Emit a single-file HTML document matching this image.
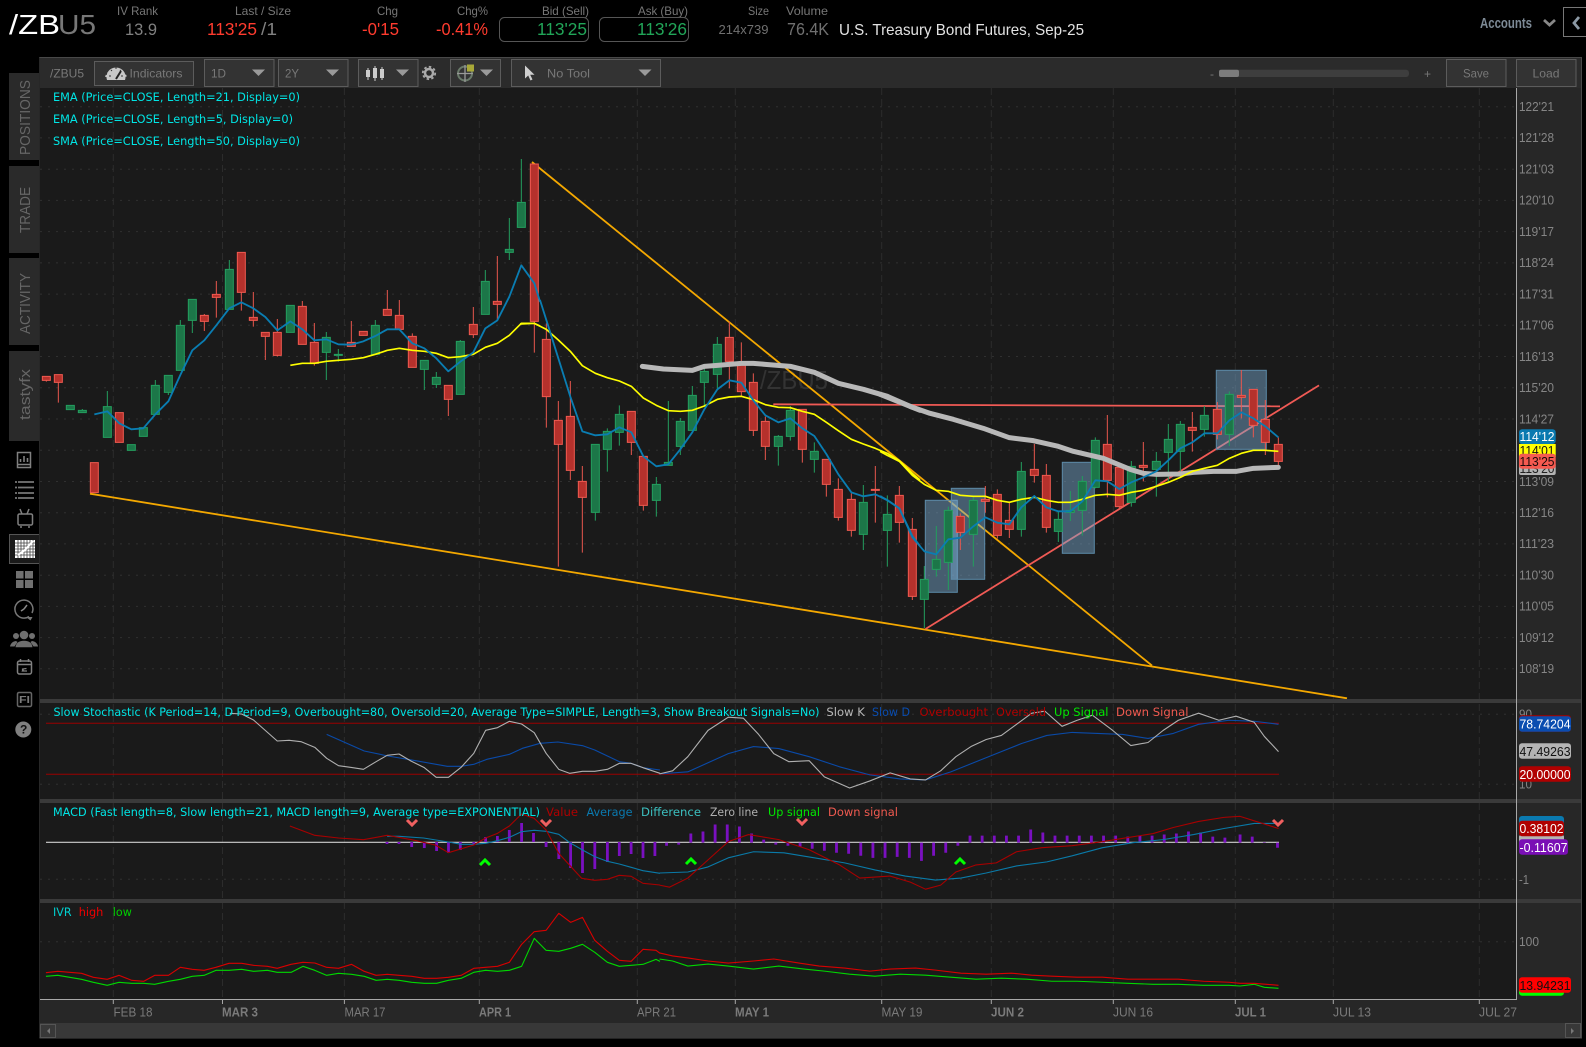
<!DOCTYPE html>
<html><head><meta charset="utf-8"><title>/ZBU5</title>
<style>
html,body{margin:0;padding:0;background:#000;width:1586px;height:1047px;overflow:hidden}
svg{display:block}
text{font-family:"Liberation Sans",sans-serif;white-space:pre}
.lg{font-family:"DejaVu Sans",sans-serif;font-size:11.5px}
.h{font-size:12px;fill:#777}
.ax{font-size:12.5px;fill:#858585}
.dt{font-size:12.5px;fill:#7a7a7a}
.b{font-weight:bold}
.fl{font-size:12.5px}
.tb{font-size:12px;fill:#787878}
.tab{font-size:15px;fill:#666}
.cr{fill:#b5312c;stroke:#f05a50;stroke-width:3}
.cg{fill:#1c7648;stroke:#239e5e;stroke-width:3}
.wr{stroke:#e8574e;stroke-width:3;fill:none}
.wg{stroke:#239e5e;stroke-width:3;fill:none}
.blu{fill:none;stroke:#0a7db2;stroke-width:5.5;stroke-linejoin:round}
.yel{fill:none;stroke:#ffff00;stroke-width:5;stroke-linejoin:round}
.gry{fill:none;stroke:#b8b8b8;stroke-width:15;stroke-linejoin:round;stroke-linecap:round}
.s{fill:none;vector-effect:non-scaling-stroke;stroke-width:1.1;stroke-linejoin:round}
.btn{fill:#333;stroke:#5c5c5c}
.ic{fill:none;stroke:#808080;stroke-width:1.5}
</style></head><body>
<svg width="1586" height="1047" viewBox="0 0 1586 1047" xmlns="http://www.w3.org/2000/svg">
<rect width="1586" height="1047" fill="#000"/>

<!-- header -->
<text x="9" y="34" font-size="28" fill="#fff" textLength="51" lengthAdjust="spacingAndGlyphs">/ZB</text>
<text x="58" y="34" font-size="28" fill="#777" textLength="38" lengthAdjust="spacingAndGlyphs">U5</text>
<text class="h" x="117" y="15" textLength="41" lengthAdjust="spacingAndGlyphs">IV Rank</text>
<text x="125" y="35" font-size="17" fill="#808080" textLength="32" lengthAdjust="spacingAndGlyphs">13.9</text>
<text class="h" x="235" y="15" textLength="56" lengthAdjust="spacingAndGlyphs">Last / Size</text>
<text x="207" y="35" font-size="17.5" fill="#ff3b2e" textLength="50" lengthAdjust="spacingAndGlyphs">113'25</text>
<text x="261" y="35" font-size="17.5" fill="#808080" textLength="16" lengthAdjust="spacingAndGlyphs">/1</text>
<text class="h" x="377" y="15" textLength="21" lengthAdjust="spacingAndGlyphs">Chg</text>
<text x="362" y="35" font-size="17.5" fill="#ff3b2e" textLength="37" lengthAdjust="spacingAndGlyphs">-0'15</text>
<text class="h" x="457" y="15" textLength="31" lengthAdjust="spacingAndGlyphs">Chg%</text>
<text x="436" y="35" font-size="17.5" fill="#ff3b2e" textLength="52" lengthAdjust="spacingAndGlyphs">-0.41%</text>
<text class="h" x="542" y="15" textLength="47" lengthAdjust="spacingAndGlyphs">Bid (Sell)</text>
<rect x="499.5" y="17.5" width="89" height="24" rx="5" fill="#000" stroke="#555"/>
<text x="537" y="35" font-size="17.5" fill="#21a558" textLength="50" lengthAdjust="spacingAndGlyphs">113'25</text>
<text class="h" x="638" y="15" textLength="50" lengthAdjust="spacingAndGlyphs">Ask (Buy)</text>
<rect x="599.5" y="17.5" width="89" height="24" rx="5" fill="#000" stroke="#555"/>
<text x="637" y="35" font-size="17.5" fill="#21a558" textLength="50" lengthAdjust="spacingAndGlyphs">113'26</text>
<text class="h" x="748" y="15" textLength="21" lengthAdjust="spacingAndGlyphs">Size</text>
<text x="718.5" y="34" font-size="13" fill="#707070" textLength="50" lengthAdjust="spacingAndGlyphs">214x739</text>
<text class="h" x="786" y="15" textLength="42" lengthAdjust="spacingAndGlyphs">Volume</text>
<text x="787" y="35" font-size="17.5" fill="#707070" textLength="42" lengthAdjust="spacingAndGlyphs">76.4K</text>
<text x="839" y="35" font-size="16" fill="#e2e2e2" textLength="245" lengthAdjust="spacingAndGlyphs">U.S. Treasury Bond Futures, Sep-25</text>
<text x="1480" y="28" font-size="15" font-weight="bold" fill="#7d8a96" textLength="52" lengthAdjust="spacingAndGlyphs">Accounts</text>
<path d="M1544 20l5.5 5 5.5-5" fill="none" stroke="#888" stroke-width="2.8"/>
<rect x="1563.5" y="7.5" width="30" height="29" fill="none" stroke="#777"/>
<path d="M1579 17l-5 6 5 6" fill="none" stroke="#8d9aa6" stroke-width="2.8"/>

<!-- left tabs -->
<rect x="9" y="73" width="30" height="87" fill="#2a2a2a"/>
<rect x="9" y="166" width="30" height="87" fill="#2a2a2a"/>
<rect x="9" y="258" width="30" height="87" fill="#2a2a2a"/>
<rect x="9" y="351" width="30" height="90" fill="#2a2a2a"/>
<text class="tab" transform="translate(30,155) rotate(-90)" textLength="75" lengthAdjust="spacingAndGlyphs">POSITIONS</text>
<text class="tab" transform="translate(30,233) rotate(-90)" textLength="46" lengthAdjust="spacingAndGlyphs">TRADE</text>
<text class="tab" transform="translate(30,334) rotate(-90)" textLength="61" lengthAdjust="spacingAndGlyphs">ACTIVITY</text>
<text class="tab" transform="translate(30,420) rotate(-90)" textLength="51" lengthAdjust="spacingAndGlyphs">tastyfx</text>

<!-- sidebar icons -->
<g class="ic">
<path d="M17.5 452.5h13v12h-13zM17.5 464.5v3h13v-3"/>
<path d="M20.5 462v-3M24 462v-6M27.5 462v-4" stroke-width="1.6"/>
</g>
<path d="M15 482h19M15 487.500h19M15 493h19M15 498h19" stroke="#777" stroke-width="1.8" stroke-dasharray="2 1 16 1"/>
<g class="ic"><rect x="18" y="514" width="14.500" height="11" rx="1.500"/><path d="M22 514l-2-5M27 514l2-5M20 527h2M28 527h2"/></g>
<rect x="9.500" y="534.500" width="31" height="29" fill="#1a1a1a" stroke="#555"/>
<path d="M15 540h20v18h-20z" fill="#fff"/>
<path d="M15 543h20M15 546h20M15 549h20M15 552h20M15 555h20M18 540v18M21 540v18M24 540v18M27 540v18M30 540v18M33 540v18" stroke="#444" stroke-width=".8"/>
<path d="M18 555l7-5 8-9" stroke="#fff" stroke-width="2" fill="none"/>
<path d="M16 571h7.500v7.500h-7.500zM25 571h8v7.500h-8zM16 580h7.500v8h-7.500zM25 580h8v8h-8z" fill="#707070"/>
<g class="ic" stroke-width="1.600"><path d="M32 613a9 9 0 1 0-3 3.500" stroke="#777"/><path d="M24 609l3-4M24 609l-3 2" stroke="#888"/><path d="M26 617h6.500l-2 3.500z" fill="#777" stroke="none"/></g>
<g fill="#6f6f6f">
<circle cx="16" cy="636" r="3"/><circle cx="32" cy="636" r="3"/>
<path d="M10 646.500c.5-3 2.500-5 6-5.500l1.500 1-3 4.500zM38 646.500c-.5-3-2.500-5-6-5.500l-1.500 1 3 4.500z"/>
<circle cx="24" cy="635" r="4.300"/>
<path d="M15.500 647.300c.5-4 3-6.500 8.500-6.500s8 2.500 8.500 6.500z"/>
</g>
<g class="ic"><rect x="17.500" y="661" width="14" height="13" rx="2"/><path d="M17.500 664.500h14M20.500 659v3M28.500 659v3"/><path d="M27 671h-4.500l1-1.500M22.500 671l0-2 4-.5" stroke-width="1.200"/></g>
<rect x="17.500" y="692.500" width="14" height="14" rx="1.500" fill="none" stroke="#666" stroke-width="1.500"/>
<text x="19" y="703" font-size="10" font-weight="bold" fill="#7a7a7a" textLength="11" lengthAdjust="spacingAndGlyphs">FI</text>
<circle cx="23.300" cy="729.500" r="8" fill="#808080"/>
<text x="20" y="733.500" font-size="12" font-weight="bold" fill="#111">?</text>

<!-- chart frame -->
<rect x="39" y="57" width="1543" height="981" fill="#272727"/>
<path d="M39.500 57.500H1581.500V1038H39.500" fill="none" stroke="#484848"/>
<rect x="40" y="58" width="1541" height="30" fill="#2b2b2b"/>
<rect x="40" y="88" width="1476.500" height="911" fill="#1a1a1a"/>

<!-- grid -->
<path d="M40 106.700H1516M40 137.900H1516M40 169.200H1516M40 200.400H1516M40 231.600H1516M40 262.900H1516M40 294.100H1516M40 325.300H1516M40 356.500H1516M40 387.800H1516M40 419H1516M40 450.200H1516M40 481.500H1516M40 512.700H1516M40 543.900H1516M40 575.200H1516M40 606.400H1516M40 637.600H1516M40 668.800H1516M40 714.300H1516M40 784.300H1516M40 879.300H1516M40 941.700H1516" stroke="#303030" stroke-dasharray="2 6" fill="none"/>
<path d="M113.300 88V999M222.500 88V999M344.400 88V999M479.300 88V999M637.300 88V999M735.300 88V999M881.700 88V999M991.300 88V999M1113.300 88V999M1235.300 88V999M1333.300 88V999M1479.300 88V999" stroke="#2c2c2c" stroke-dasharray="7 4" fill="none"/>

<!-- watermark -->
<text x="760" y="389" font-size="26" fill="#333" textLength="68" lengthAdjust="spacingAndGlyphs">/ZBU5</text>

<!-- trend lines -->
<path d="M90 493.700L1347 698.300" stroke="#f4a800" stroke-width="1.800" fill="none"/>
<path d="M532 162L1152 665.600" stroke="#f4a800" stroke-width="1.800" fill="none"/>
<path d="M925.500 629L1319 385.400" stroke="#f05a55" stroke-width="1.800" fill="none"/>
<path d="M773.300 404.300L1280 406.300" stroke="#f05a55" stroke-width="1.800" fill="none"/>

<!-- blue rects -->
<g fill="#7cb0d8" fill-opacity=".45" stroke="#5c8aa8">
<rect x="925.300" y="500.300" width="32" height="92"/>
<rect x="951.300" y="488.300" width="33.400" height="91"/>
<rect x="1062.300" y="462.300" width="32" height="91"/>
<rect x="1216.300" y="370.300" width="50" height="79"/>
</g>

<!-- candles A -->
<g transform="translate(40,180) scale(.33333)">
<path class="wr" d="M19 589V605M55 584V668M493 402V453M529 303V413M604 217V392M640 336V440M676 457V540M712 417V530M787 363V493M823 429V557M934 423V499M1042 330V406M1078 360V448M1117 460V562M1225 616V708M1300 381V474M1372 228V420M1483 -48V518"/>
<path class="wg" d="M127 687V698M202 633V772M346 600V703M385 586V645M421 420V571M457 358V459M568 240V388M859 456V600M895 507V545M1006 420V523M1153 541V630M1189 576V624M1261 480V643M1336 270V403M1408 114V240M1444 -63V142"/>
<path class="cr" d="M7 589h24V601h-24zM43 584h24V607h-24zM151 848h24V938h-24zM226 698h24V787h-24zM481 406h24V424h-24zM517 343h24V352h-24zM592 217h24V337h-24zM628 412h24V421h-24zM664 457h24V469h-24zM700 457h24V526h-24zM775 379h24V493h-24zM811 487h24V550h-24zM922 487h24V499h-24zM958 454h24V466h-24zM1030 388h24V406h-24zM1066 406h24V448h-24zM1105 469h24V562h-24zM1213 616h24V658h-24zM1288 433h24V464h-24zM1360 364h24V373h-24zM1471 -48h24V424h-24z"/>
<path class="cg" d="M79 676h24V689h-24zM115 691h24V698h-24zM190 680h24V772h-24zM262 794h24V811h-24zM298 743h24V769h-24zM334 616h24V703h-24zM373 586h24V637h-24zM409 436h24V571h-24zM445 358h24V421h-24zM556 268h24V388h-24zM739 376h24V457h-24zM847 472h24V517h-24zM883 523h24V526h-24zM994 436h24V523h-24zM1141 541h24V568h-24zM1177 592h24V613h-24zM1249 484h24V643h-24zM1324 304h24V403h-24zM1396 208h24V217h-24zM1432 67h24V142h-24z"/>
</g>
<!-- candles B -->
<g transform="translate(520,300) scale(.33333)">
<path class="wr" d="M79 70V383M115 303V800M151 243V540M187 498V758M334 334V465M370 469V632M628 65V265M664 127V290M700 220V408M736 350V480M847 328V488M919 478V590M955 535V662M994 580V710M1066 498V668M1138 558V728"/>
<path class="wg" d="M226 433V662M262 385V515M298 316V437M409 531V650M445 303V496M481 354V465M517 258V391M553 205V318M592 111V265M775 405V497M811 318V422M883 427V518M1030 555V750M1102 586V800"/>
<path class="cr" d="M67 118h24V290h-24zM103 361h24V433h-24zM139 349h24V511h-24zM175 544h24V592h-24zM322 334h24V427h-24zM358 469h24V616h-24zM616 112h24V184h-24zM652 190h24V275h-24zM688 247h24V391h-24zM724 364h24V439h-24zM835 328h24V448h-24zM907 478h24V553h-24zM943 568h24V652h-24zM982 598h24V691h-24zM1054 568h24V571h-24zM1126 586h24V667h-24z"/>
<path class="cg" d="M214 433h24V637h-24zM250 394h24V448h-24zM286 343h24V397h-24zM397 553h24V601h-24zM433 487h24V496h-24zM469 364h24V439h-24zM505 286h24V391h-24zM541 214h24V247h-24zM580 133h24V223h-24zM763 409h24V439h-24zM799 331h24V409h-24zM871 454h24V478h-24zM1018 607h24V703h-24zM1090 643h24V691h-24z"/>
</g>
<!-- candles C -->
<g transform="translate(880,350) scale(.33333)">
<path class="wr" d="M97 504V750M241 490V600M316 408V488M352 418V566M388 457V564M463 282V398M499 342V548M682 195V442M718 340V475M790 276V394M937 186V305M1012 156V268M1084 60V205M1120 118V262M1156 150V315M1195 262V348"/>
<path class="wg" d="M133 648V834M169 528V680M205 470V720M280 436V650M424 336V560M535 486V576M571 423V513M607 378V557M646 262V415M754 333V470M829 306V440M865 222V395M901 213V364M973 168V260M1048 124V288"/>
<path class="cr" d="M85 538h24V739h-24zM229 499h24V547h-24zM304 448h24V454h-24zM340 433h24V556h-24zM376 511h24V538h-24zM451 358h24V376h-24zM487 376h24V532h-24zM670 283h24V391h-24zM706 352h24V470h-24zM778 346h24V352h-24zM925 232h24V241h-24zM1000 178h24V253h-24zM1072 136h24V142h-24zM1108 118h24V226h-24zM1144 208h24V277h-24zM1183 283h24V334h-24z"/>
<path class="cg" d="M121 688h24V748h-24zM157 628h24V658h-24zM193 481h24V637h-24zM268 451h24V553h-24zM412 364h24V538h-24zM523 508h24V544h-24zM559 481h24V487h-24zM595 394h24V481h-24zM634 271h24V412h-24zM742 349h24V457h-24zM817 334h24V358h-24zM853 268h24V307h-24zM889 223h24V304h-24zM961 196h24V238h-24zM1036 133h24V253h-24z"/>
</g>

<!-- moving averages -->
<g transform="translate(40,180) scale(.33333)">
<path class="yel" d="M751 556L787 550 823 550 859 544 895 541 934 538 970 533 1006 523 1042 511 1078 505 1117 511 1153 514 1189 520 1225 533 1261 530 1300 523 1336 502 1372 490 1408 466 1444 430 1483 430 1500 438"/>
<path class="blu" d="M163 703L202 694 238 730 274 748 310 745 346 703 385 664 421 585 457 511 493 481 529 436 568 385 604 367 640 385 676 411 712 451 751 424 787 448 823 481 859 478 895 493 934 494 970 484 1006 468 1042 448 1078 448 1117 490 1153 505 1189 535 1225 574 1261 545 1300 517 1336 445 1372 421 1408 350 1444 256 1483 310 1500 365"/>
</g>
<g transform="translate(520,300) scale(.33333)">
<path class="gry" d="M367 199L430 207 517 211 553 199 592 196 664 190 700 190 736 193 811 199 883 217 955 250 1030 268 1102 289 1177 322 1200 331"/>
<path class="yel" d="M0 72L43 70 79 88 115 120 151 154 187 197 226 220 262 233 298 243 334 259 370 294 409 316 445 332 481 334 517 331 553 318 592 298 628 291 664 289 700 299 736 314 775 322 811 323 847 334 883 343 919 367 955 392 994 418 1030 432 1066 445 1102 460 1138 482 1177 520 1200 540"/>
<path class="blu" d="M60 0L79 60 115 175 151 290 187 394 226 406 262 403 298 382 334 397 370 469 409 499 445 493 481 448 517 397 553 328 592 268 628 241 664 248 700 301 736 346 775 367 811 355 847 385 883 408 919 462 955 523 994 577 1030 589 1066 583 1102 601 1138 625 1177 708 1200 738"/>
</g>
<g transform="translate(880,350) scale(.33333)">
<path class="gry" d="M0 133L30 145 90 169 150 190 220 208 310 235 388 263 460 272 535 289 580 304 670 325 750 358 790 370 830 373 900 372 940 367 1000 364 1070 364 1120 355 1195 352"/>
<path class="yel" d="M0 304L22 316 58 334 97 376 133 403 169 421 205 424 241 436 280 439 316 439 352 451 388 457 424 448 463 442 499 451 535 457 571 457 607 448 646 436 682 433 718 436 754 427 790 421 829 409 865 397 901 382 937 364 973 355 1012 346 1048 325 1084 310 1120 301 1156 301 1195 304"/>
<path class="blu" d="M0 438L22 450 58 475 97 562 133 604 169 613 205 568 241 563 280 529 316 502 352 518 388 523 424 472 463 438 499 472 535 484 571 484 607 454 646 391 682 394 718 417 754 397 790 382 829 364 865 331 901 295 937 277 973 250 1012 250 1048 211 1084 187 1120 205 1156 229 1195 262"/>
</g>

<!-- legends main -->
<text class="lg" x="53" y="101" fill="#00e5e5" textLength="247" lengthAdjust="spacingAndGlyphs">EMA (Price=CLOSE, Length=21, Display=0)</text>
<text class="lg" x="53" y="123" fill="#00e5e5" textLength="240" lengthAdjust="spacingAndGlyphs">EMA (Price=CLOSE, Length=5, Display=0)</text>
<text class="lg" x="53" y="145" fill="#00e5e5" textLength="247" lengthAdjust="spacingAndGlyphs">SMA (Price=CLOSE, Length=50, Display=0)</text>

<!-- stochastic -->
<path d="M46 723.300H1279M46 774.300H1279" stroke="#9a0000" stroke-width="1" fill="none"/>
<g transform="translate(40,690) scale(.3954,.33333)">
<path class="s" stroke="#0a4aa8" d="M725 133L820 183 880 198 950 212 1030 229 1065 229 1097 223 1130 208 1187 193 1220 175 1265 160 1310 156 1372 167 1403 180 1465 215 1495 220 1525 233 1568 240"/>
<path class="s" stroke="#b0b0b0" d="M480 70L510 72 540 90 600 153 630 151 660 155 695 172 725 205 755 227 785 232 818 238 850 215 878 196 908 192 938 213 972 233 1002 262 1033 262 1065 232 1097 190 1127 121 1157 113 1187 94 1218 102 1250 128 1280 190 1312 238 1340 250 1372 244 1403 244 1435 238 1465 220 1495 220 1525 233 1568 250"/>
</g>
<g transform="scale(1.01148,1.01159)">
<path class="s" stroke="#0a4aa8" d="M652 765L680 763 700 754 720 745 745 738 770 740 800 748 830 758 860 766 890 770 915 771 940 763 960 755 985 745 1010 735 1035 727 1060 724 1085 725 1110 726 1135 730 1160 725 1185 716 1215 712 1240 713 1264 716"/>
<path class="s" stroke="#b0b0b0" d="M652 765L665 762 680 748 700 722 720 709 735 710 750 726 765 745 780 753 800 752 815 768 840 779 860 772 880 764 900 770 915 771 930 762 945 748 960 738 975 731 990 727 1005 716 1020 705 1033 703 1050 718 1065 712 1080 707 1100 722 1118 737 1135 734 1150 722 1165 712 1185 705 1205 712 1222 708 1240 714 1250 728 1264 743"/>
</g>
<text class="lg" x="53.500" y="716" fill="#00e5e5" textLength="766" lengthAdjust="spacingAndGlyphs">Slow Stochastic (K Period=14, D Period=9, Overbought=80, Oversold=20, Average Type=SIMPLE, Length=3, Show Breakout Signals=No)</text>
<text class="lg" x="826.400" y="716" fill="#b8b8b8" textLength="38.500" lengthAdjust="spacingAndGlyphs">Slow K</text>
<text class="lg" x="872" y="716" fill="#0a4db0" textLength="38" lengthAdjust="spacingAndGlyphs">Slow D</text>
<text class="lg" x="919.500" y="716" fill="#b00000" textLength="68.500" lengthAdjust="spacingAndGlyphs">Overbought</text>
<text class="lg" x="996" y="716" fill="#b00000" textLength="50" lengthAdjust="spacingAndGlyphs">Oversold</text>
<text class="lg" x="1054" y="716" fill="#00e800" textLength="54.500" lengthAdjust="spacingAndGlyphs">Up Signal</text>
<text class="lg" x="1116" y="716" fill="#f05a50" textLength="72.500" lengthAdjust="spacingAndGlyphs">Down Signal</text>

<!-- MACD -->
<path d="M46 842.300H1279" stroke="#cfcfcf" stroke-width="1.200" fill="none"/>
<g stroke="#7a10c0" stroke-width="2.800" fill="none">
<g transform="translate(40,0)">
<path d="M347 842V844M359 842V844M371.700 842V847M384.300 842V848M396.600 842V851M408.500 842V853M420.300 842V850M433.800 842V844M445.600 837V842M457.400 836V842M469.300 830V842M481.600 823V842M493.500 833V842M506.100 842V847M518.800 842V859M530.600 842V868M542.500 842V873M554.800 842V869M567.400 842V862M579.300 842V856M591.100 842V854M603 842V858M614.900 842V856"/>
</g>
<g transform="scale(1.01148,1.01159)">
<path d="M659 833V836M671 833V835M683 833V824M695 833V822M707 833V815M719 833V815M731 833V817M743 833V824M755 833V830M767 833V835M779 833V836M791 833V837M803 833V839M815 833V841M827 833V843M839 833V844M851 833V846M863 833V848M875 833V848M887 833V847M899 833V848M911 833V851M923 833V846M935 833V843M947 833V836M959 833V826M971 833V826M983 833V826M995 833V826M1007 833V826M1019 833V820M1031 833V823M1043 833V826M1055 833V826M1067 833V826M1079 833V826M1091 833V826M1103 833V826M1115 833V827M1127 833V826M1139 833V826M1151 833V825M1163 833V824M1175 833V822M1187 833V823M1199 833V827M1211 833V828M1226 833V825M1238 833V827M1250 833V832.500M1263 833V838"/>
</g>
</g>
<g transform="translate(40,690) scale(.3954,.33333)">
<path class="s" stroke="#0a7aa8" d="M878 439L908 439 970 444 1033 456 1065 463 1097 463 1127 460 1157 452 1187 442 1218 425 1250 421 1280 424 1312 433 1340 458 1372 480 1403 500 1435 514 1465 522 1495 532 1525 542 1568 550"/>
<path class="s" stroke="#a80000" d="M632 408L695 436 755 444 818 449 878 436 940 449 1000 465 1033 488 1097 465 1127 444 1157 430 1187 408 1218 372 1250 385 1280 420 1312 490 1370 565 1403 571 1435 568 1465 556 1495 559 1525 580 1568 585"/>
</g>
<g transform="scale(1.01148,1.01159)">
<path class="s" stroke="#0a7aa8" d="M652 863L680 862 700 857 720 848 745 842 775 843 805 848 835 853 865 860 895 866 925 870 950 868 975 863 1005 856 1035 852 1060 846 1090 838 1120 833 1150 830 1180 825 1210 819 1240 814 1264 814"/>
<path class="s" stroke="#a80000" d="M652 875L662 877 680 868 700 850 720 832 740 825 770 830 800 840 830 855 850 868 880 866 900 872 915 879 930 875 945 862 965 855 985 853 1005 842 1030 838 1060 836 1090 832 1115 828 1140 824 1160 818 1185 812 1210 808 1226 807 1264 819"/>
</g>
<g fill="none" stroke="#f06060" stroke-width="3">
<path d="M407 820l5 5 5-5M541 820l5 5 5-5M797 819l5 5 5-5M1273 820l5 5 5-5"/>
</g>
<g fill="none" stroke="#00ff00" stroke-width="3">
<path d="M480 865l5-5 5 5M686 864l5-5 5 5M955 864l5-5 5 5"/>
</g>
<text class="lg" x="53" y="816" fill="#00e5e5" textLength="487" lengthAdjust="spacingAndGlyphs">MACD (Fast length=8, Slow length=21, MACD length=9, Average type=EXPONENTIAL)</text>
<text class="lg" x="546" y="816" fill="#b00000" textLength="32" lengthAdjust="spacingAndGlyphs">Value</text>
<text class="lg" x="586.500" y="816" fill="#0a7ab0" textLength="46" lengthAdjust="spacingAndGlyphs">Average</text>
<text class="lg" x="641" y="816" fill="#3cc0c0" textLength="60" lengthAdjust="spacingAndGlyphs">Difference</text>
<text class="lg" x="710" y="816" fill="#b0b0b0" textLength="48" lengthAdjust="spacingAndGlyphs">Zero line</text>
<text class="lg" x="768" y="816" fill="#00e800" textLength="52" lengthAdjust="spacingAndGlyphs">Up signal</text>
<text class="lg" x="828" y="816" fill="#f05a50" textLength="70" lengthAdjust="spacingAndGlyphs">Down signal</text>

<!-- IVR -->
<g transform="translate(40,890) scale(.3954,.33333)">
<path class="s" stroke="#00d800" d="M15 259L45 256 105 268 135 277 170 286 200 277 232 280 262 280 290 283 325 274 355 268 385 259 415 256 445 241 478 241 510 238 540 244 575 241 600 247 635 247 665 229 695 241 725 256 755 250 788 253 820 259 850 271 878 268 908 271 940 277 972 280 1003 280 1033 271 1065 265 1097 247 1127 241 1157 244 1187 241 1218 229 1250 145 1280 181 1312 184 1342 175 1372 163 1403 187 1435 217 1465 229 1495 226 1525 223 1558 208 1568 214"/>
<path class="s" stroke="#d80000" d="M15 248L45 244 105 250 135 262 170 268 200 256 232 271 262 274 290 256 325 256 355 232 385 238 415 241 445 232 478 220 510 220 540 226 575 229 600 235 635 223 665 217 695 219 725 232 755 235 788 223 820 244 850 256 878 253 908 256 940 259 972 265 1003 265 1033 262 1065 256 1097 235 1127 232 1157 229 1187 217 1218 163 1250 125 1280 121 1312 70 1342 97 1372 82 1403 151 1435 184 1465 211 1495 214 1525 178 1558 181 1568 190"/>
</g>
<g transform="scale(1.01148,1.01159)">
<path class="s" stroke="#00d800" d="M652 948L665 950 680 955 700 953 720 955 745 958 770 955 795 958 815 960 840 963 865 965 890 963 915 964 940 966 965 968 990 967 1015 968 1040 970 1065 970 1090 971 1115 972 1140 973 1165 973 1190 974 1215 974 1226 974.700 1240 973 1250 976 1264 977"/>
<path class="s" stroke="#d80000" d="M652 942L665 945 680 947 700 950 720 952 745 950 765 948 790 952 810 955 835 957 860 960 880 958 905 957 925 959 950 962 975 963 1000 962 1020 964 1040 965 1065 966 1090 966 1115 968 1140 968 1165 968 1190 970 1215 971 1226 972 1240 972 1264 974"/>
</g>
<text class="lg" x="53" y="916" fill="#00d0d0" textLength="18.600" lengthAdjust="spacingAndGlyphs">IVR</text>
<text class="lg" x="78.700" y="916" fill="#ee0000" textLength="24.600" lengthAdjust="spacingAndGlyphs">high</text>
<text class="lg" x="112.800" y="916" fill="#00d000" textLength="19" lengthAdjust="spacingAndGlyphs">low</text>

<!-- right panel + separators -->
<rect x="1517" y="88" width="64" height="911" fill="#272727"/>
<path d="M40 701H1581M40 801H1581M40 901H1581" stroke="#3a3a3a" stroke-width="4" fill="none"/>
<path d="M1516.500 88V999.500H40" stroke="#a8a8a8" fill="none"/>
<path d="M113.300 1000v4M222.500 1000v4M344.400 1000v4M479.300 1000v4M637.300 1000v4M735.300 1000v4M881.700 1000v4M991.300 1000v4M1113.300 1000v4M1235.300 1000v4M1333.300 1000v4M1479.300 1000v4" stroke="#a8a8a8" fill="none"/>

<!-- price axis -->
<g>
<text class="ax" x="1519" y="111" textLength="35" lengthAdjust="spacingAndGlyphs">122'21</text>
<text class="ax" x="1519" y="142" textLength="35" lengthAdjust="spacingAndGlyphs">121'28</text>
<text class="ax" x="1519" y="173.500" textLength="35" lengthAdjust="spacingAndGlyphs">121'03</text>
<text class="ax" x="1519" y="204.700" textLength="35" lengthAdjust="spacingAndGlyphs">120'10</text>
<text class="ax" x="1519" y="236" textLength="35" lengthAdjust="spacingAndGlyphs">119'17</text>
<text class="ax" x="1519" y="267" textLength="35" lengthAdjust="spacingAndGlyphs">118'24</text>
<text class="ax" x="1519" y="298.500" textLength="35" lengthAdjust="spacingAndGlyphs">117'31</text>
<text class="ax" x="1519" y="329.600" textLength="35" lengthAdjust="spacingAndGlyphs">117'06</text>
<text class="ax" x="1519" y="361" textLength="35" lengthAdjust="spacingAndGlyphs">116'13</text>
<text class="ax" x="1519" y="392" textLength="35" lengthAdjust="spacingAndGlyphs">115'20</text>
<text class="ax" x="1519" y="423.400" textLength="35" lengthAdjust="spacingAndGlyphs">114'27</text>
<text class="ax" x="1519" y="486" textLength="35" lengthAdjust="spacingAndGlyphs">113'09</text>
<text class="ax" x="1519" y="517" textLength="35" lengthAdjust="spacingAndGlyphs">112'16</text>
<text class="ax" x="1519" y="548.200" textLength="35" lengthAdjust="spacingAndGlyphs">111'23</text>
<text class="ax" x="1519" y="579.500" textLength="35" lengthAdjust="spacingAndGlyphs">110'30</text>
<text class="ax" x="1519" y="610.700" textLength="35" lengthAdjust="spacingAndGlyphs">110'05</text>
<text class="ax" x="1519" y="642" textLength="35" lengthAdjust="spacingAndGlyphs">109'12</text>
<text class="ax" x="1519" y="673" textLength="35" lengthAdjust="spacingAndGlyphs">108'19</text>
<text class="ax" x="1519" y="718.500" textLength="13" lengthAdjust="spacingAndGlyphs">90</text>
<text class="ax" x="1519" y="788.500" textLength="13" lengthAdjust="spacingAndGlyphs">10</text>
<text class="ax" x="1519" y="884" textLength="10" lengthAdjust="spacingAndGlyphs">-1</text>
<text class="ax" x="1519" y="946" textLength="20" lengthAdjust="spacingAndGlyphs">100</text>
</g>

<!-- flags main -->
<rect x="1519" y="463" width="36.700" height="12" rx="2" fill="#b4b4b4"/>
<text class="fl" x="1519.500" y="473" fill="#222" textLength="35" lengthAdjust="spacingAndGlyphs">113'20</text>
<rect x="1519" y="444" width="36.700" height="13" fill="#ffff00"/>
<text class="fl" x="1519.500" y="455" fill="#111" textLength="35" lengthAdjust="spacingAndGlyphs">114'01</text>
<rect x="1519" y="429.300" width="36.700" height="14.700" rx="3" fill="#0a7ab0"/>
<text class="fl" x="1519.500" y="441" fill="#fff" textLength="35" lengthAdjust="spacingAndGlyphs">114'12</text>
<rect x="1519" y="453.700" width="36.700" height="15" rx="3" fill="#f55a50"/>
<text class="fl" x="1519.500" y="466" fill="#1a0a0a" textLength="35" lengthAdjust="spacingAndGlyphs">113'25</text>

<!-- flags stoch -->
<rect x="1519" y="715.300" width="52" height="16.400" rx="3" fill="#a80000"/>
<rect x="1519" y="716.200" width="52" height="15.500" rx="3" fill="#0a4db0"/>
<text class="fl" x="1519.500" y="728.500" fill="#fff" textLength="51" lengthAdjust="spacingAndGlyphs">78.74204</text>
<rect x="1519" y="743.300" width="52" height="15.500" rx="3" fill="#b4b4b4"/>
<text class="fl" x="1519.500" y="756" fill="#111" textLength="51" lengthAdjust="spacingAndGlyphs">47.49263</text>
<rect x="1519" y="766.300" width="52" height="15.500" rx="3" fill="#b00000"/>
<text class="fl" x="1519.500" y="779" fill="#fff" textLength="51" lengthAdjust="spacingAndGlyphs">20.00000</text>

<!-- flags macd -->
<rect x="1519" y="816" width="45" height="12" rx="3" fill="#0a7ab0"/>
<rect x="1519" y="835" width="45" height="8" rx="2" fill="#b4b4b4"/>
<rect x="1519" y="820.700" width="45" height="15.600" rx="3" fill="#b00000"/>
<text class="fl" x="1519.500" y="833" fill="#fff" textLength="44" lengthAdjust="spacingAndGlyphs">0.38102</text>
<rect x="1519" y="839.300" width="49" height="15.400" rx="3" fill="#7a0fb5"/>
<text class="fl" x="1519.500" y="852" fill="#fff" textLength="48" lengthAdjust="spacingAndGlyphs">-0.11607</text>

<!-- flags ivr -->
<rect x="1519" y="982" width="45" height="13.700" rx="3" fill="#00ff00"/>
<rect x="1519" y="977.300" width="52" height="15.400" rx="3" fill="#ff0000"/>
<text class="fl" x="1519.500" y="990" fill="#111" textLength="51" lengthAdjust="spacingAndGlyphs">13.94231</text>

<!-- date axis -->
<text class="dt" x="113.500" y="1016.500" textLength="39" lengthAdjust="spacingAndGlyphs">FEB 18</text>
<text class="dt b" x="222" y="1016.500" textLength="36" lengthAdjust="spacingAndGlyphs">MAR 3</text>
<text class="dt" x="344.500" y="1016.500" textLength="41" lengthAdjust="spacingAndGlyphs">MAR 17</text>
<text class="dt b" x="479" y="1016.500" textLength="32" lengthAdjust="spacingAndGlyphs">APR 1</text>
<text class="dt" x="637" y="1016.500" textLength="39" lengthAdjust="spacingAndGlyphs">APR 21</text>
<text class="dt b" x="735" y="1016.500" textLength="34" lengthAdjust="spacingAndGlyphs">MAY 1</text>
<text class="dt" x="881.500" y="1016.500" textLength="41" lengthAdjust="spacingAndGlyphs">MAY 19</text>
<text class="dt b" x="991" y="1016.500" textLength="33" lengthAdjust="spacingAndGlyphs">JUN 2</text>
<text class="dt" x="1113" y="1016.500" textLength="40" lengthAdjust="spacingAndGlyphs">JUN 16</text>
<text class="dt b" x="1235" y="1016.500" textLength="31" lengthAdjust="spacingAndGlyphs">JUL 1</text>
<text class="dt" x="1333" y="1016.500" textLength="38" lengthAdjust="spacingAndGlyphs">JUL 13</text>
<text class="dt" x="1479" y="1016.500" textLength="38" lengthAdjust="spacingAndGlyphs">JUL 27</text>

<!-- scroll bar -->
<rect x="40" y="1023" width="1541" height="15" fill="#383838"/>
<rect x="40.500" y="1024.500" width="15" height="13" fill="none" stroke="#555"/>
<path d="M50 1028v6l-3-3z" fill="#777"/>
<rect x="1565.500" y="1023.500" width="15" height="14" fill="none" stroke="#555"/>
<path d="M1571 1028v6l3-3z" fill="#777"/>

<!-- toolbar -->
<text class="tb" x="50" y="77.500" textLength="34" lengthAdjust="spacingAndGlyphs">/ZBU5</text>
<rect class="btn" x="94.500" y="61.500" width="99" height="24"/>
<path d="M107 80a9.500 9.500 0 1 1 18 0z" fill="#c8c8c8"/>
<path d="M106 77a10.500 10.500 0 0 1 20 0" fill="none" stroke="#c8c8c8" stroke-width="2" stroke-dasharray="2 2"/>
<path d="M116 79l5-8" stroke="#222" stroke-width="2"/>
<path d="M109 76h2M111 70l1 1M116 67v2M121 70l-1 1M123 76h-2" stroke="#333" stroke-width="1"/>
<text class="tb" x="129.500" y="77.500" textLength="53" lengthAdjust="spacingAndGlyphs">Indicators</text>
<rect class="btn" x="204.500" y="59.500" width="69.500" height="27"/>
<text class="tb" x="211" y="77.500" textLength="15" lengthAdjust="spacingAndGlyphs">1D</text>
<path d="M252 69.500h13l-6.500 6.500z" fill="#9a9a9a"/>
<rect class="btn" x="278.500" y="59.500" width="69.500" height="27"/>
<text class="tb" x="285" y="77.500" textLength="14" lengthAdjust="spacingAndGlyphs">2Y</text>
<path d="M326 69.500h13l-6.500 6.500z" fill="#9a9a9a"/>
<rect class="btn" x="358.500" y="59.500" width="59.500" height="27"/>
<path d="M368 68v12M375 66v15M382 67v13" stroke="#ccc" fill="none"/>
<path d="M366 70h4v7h-4zM373 68h4v10h-4zM380 69h4v9h-4z" fill="#ccc"/>
<path d="M396 69.500h13l-6.500 6.500z" fill="#9a9a9a"/>
<circle cx="429" cy="73" r="4" fill="none" stroke="#aaa" stroke-width="2.500"/>
<circle cx="429" cy="73" r="6.200" fill="none" stroke="#aaa" stroke-width="1.800" stroke-dasharray="2.500 2.300"/>
<rect class="btn" x="450.500" y="59.500" width="50" height="27"/>
<circle cx="465" cy="73.500" r="7" fill="none" stroke="#6a7a6a" stroke-width="2"/>
<path d="M457 73.500h16M465 65v17" stroke="#999" stroke-width="1.300"/>
<rect x="467" y="64.500" width="7" height="7" fill="#a8a838"/>
<path d="M480 69.500h13l-6.500 6.500z" fill="#9a9a9a"/>
<rect class="btn" x="511.500" y="59.500" width="149" height="27"/>
<path d="M525 65.500v13l3.200-3 2.300 5 2-1-2.300-4.800h4.300z" fill="#cfcfcf"/>
<text class="tb" x="547" y="77.500" textLength="43" lengthAdjust="spacingAndGlyphs">No Tool</text>
<path d="M638.500 69.500h13l-6.500 6.500z" fill="#9a9a9a"/>

<text x="1210" y="78" font-size="12" fill="#777">-</text>
<rect x="1219" y="69.700" width="190" height="7.300" rx="3" fill="#3e3e3e"/>
<rect x="1219" y="69.700" width="20" height="7.300" rx="2" fill="#7c7c7c"/>
<text x="1424" y="78" font-size="12" fill="#777">+</text>
<rect class="btn" x="1446.500" y="59.500" width="59.500" height="27"/>
<text class="tb" x="1463" y="77.500" textLength="26" lengthAdjust="spacingAndGlyphs">Save</text>
<rect class="btn" x="1516.500" y="59.500" width="59.500" height="27"/>
<text class="tb" x="1532.500" y="77.500" textLength="27" lengthAdjust="spacingAndGlyphs">Load</text>
</svg>
</body></html>
